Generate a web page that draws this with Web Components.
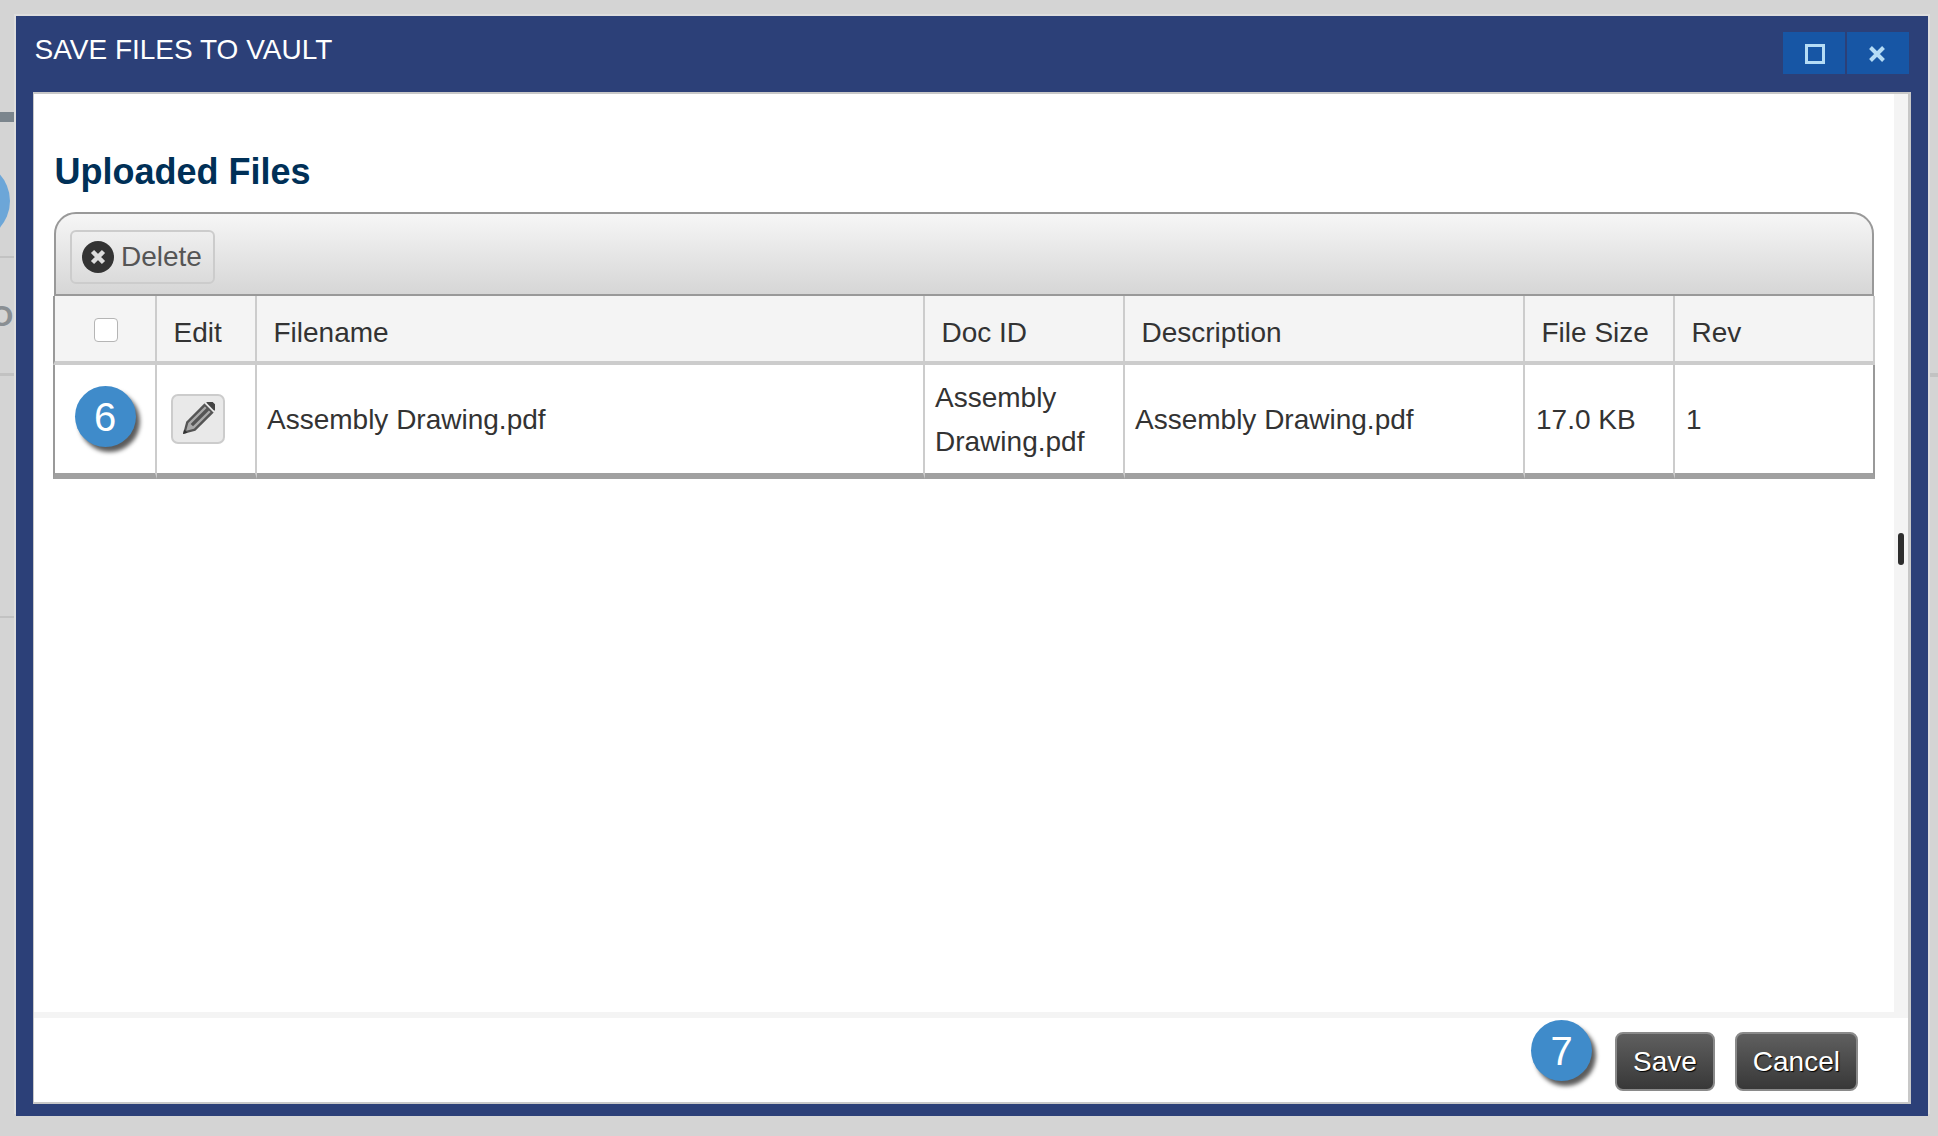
<!DOCTYPE html>
<html lang="en">
<head>
<meta charset="utf-8">
<title>Save Files to Vault</title>
<style>
    html, body { margin: 0; height: 100%; }
    body { background: #d4d4d4; font: 28px "Liberation Sans", Arial, sans-serif; color: #333; overflow: hidden; }
</style>
</head>
<body>
<vault-desktop>
    <vault-window heading="SAVE FILES TO VAULT">
        <section-heading>Uploaded Files</section-heading>
        <grid-toolbar>
            <delete-button>Delete</delete-button>
        </grid-toolbar>
        <files-table></files-table>

        <step-badge slot="footer" number="7" style="margin-top:1px"></step-badge>
        <action-button slot="footer" style="margin-left:23px">Save</action-button>
        <action-button slot="footer" style="margin-left:20px">Cancel</action-button>
    </vault-window>
</vault-desktop>

<script>
// Page behind the dialog: only its edges stick out
class VaultDesktop extends HTMLElement {
    constructor() {
        super();
        this.attachShadow({ mode: 'open' });
    }
    connectedCallback() {
        this.shadowRoot.innerHTML = `
            <style>
                :host { display: block; position: relative; height: 1136px; box-sizing: border-box; padding: 16px 10px 20px 16px; overflow: hidden; }
                .bit { position: absolute; }
                .bar { left: 0; top: 112px; width: 14px; height: 10px; background: #7b858d; }
                .circle { left: -70px; top: 161px; width: 80px; height: 80px; border-radius: 50%; background: #6ca6d8; }
                .letter { left: -10px; top: 297px; font-size: 30px; line-height: 38px; font-weight: bold; color: #8a8f93; }
                .line { left: 0; width: 14px; background: #c2c2c2; }
                .tick { right: 0; top: 373px; width: 8px; height: 4px; background: #c2c2c2; }
                ::slotted(*) { position: relative; }
            </style>
            <div class="bit bar"></div>
            <div class="bit circle"></div>
            <div class="bit letter">O</div>
            <div class="bit line" style="top:256px;height:2px"></div>
            <div class="bit line" style="top:373px;height:3px"></div>
            <div class="bit line" style="top:616px;height:2px"></div>
            <div class="bit tick"></div>
            <slot></slot>
        `;
    }
}
customElements.define('vault-desktop', VaultDesktop);

// Dialog frame: title bar, scrolling body, footer
class VaultWindow extends HTMLElement {
    constructor() {
        super();
        this.attachShadow({ mode: 'open' });
    }
    connectedCallback() {
        this.shadowRoot.innerHTML = `
            <style>
                :host { display: flex; flex-direction: column; height: 100%; box-sizing: border-box; padding: 0 17px 12px; background: #2c4078; box-shadow: -2px -2px 0 #dedede, 2px -2px 0 #dedede; }
                .titlebar { flex: none; display: flex; justify-content: space-between; height: 76px; margin: 0 2px 0 1.5px; color: #fff; }
                .title { padding-top: 18px; line-height: 32px; }
                .controls { display: flex; gap: 2px; padding-top: 16px; height: 42px; }
                .controls button { width: 62px; height: 42px; padding: 0; border: 0; background: #1756a5; display: flex; align-items: center; justify-content: center; }
                .controls svg { margin-top: 2px; }
                .content { flex: 1; min-height: 0; display: flex; flex-direction: column; background: #fff; border: solid #c8c8c8; border-width: 2px 3px 2px 1px; }
                .main { flex: 1; min-height: 0; display: flex; }
                .scroll { flex: 1; min-width: 0; box-sizing: border-box; padding: 57px 0 0 20px; }
                .track { flex: none; width: 14px; position: relative; background: #f4f4f4; }
                .thumb { position: absolute; left: 4px; top: 439px; width: 6px; height: 32px; border-radius: 3px; background: #2e2e2e; }
                .divider { flex: none; height: 6px; background: #f4f4f4; }
                .footer { flex: none; height: 84px; box-sizing: border-box; padding: 1px 50px 0 0; display: flex; justify-content: flex-end; align-items: flex-start; }
            </style>
            <div class="titlebar">
                <div class="title">${this.getAttribute('heading')}</div>
                <div class="controls">
                    <button aria-label="Maximize">
                        <svg width="20" height="20" viewBox="0 0 20 20" style="margin-left:1px"><rect x="1.5" y="1.5" width="17" height="17" fill="none" stroke="#b5dcf5" stroke-width="3"/></svg>
                    </button>
                    <button aria-label="Close">
                        <svg width="18" height="18" viewBox="0 0 18 18" style="margin-right:3px"><path d="M2.5 2.5L15.5 15.5M15.5 2.5L2.5 15.5" fill="none" stroke="#b5dcf5" stroke-width="4"/></svg>
                    </button>
                </div>
            </div>
            <div class="content">
                <div class="main">
                    <div class="scroll"><slot></slot></div>
                    <div class="track"><div class="thumb"></div></div>
                </div>
                <div class="divider"></div>
                <div class="footer"><slot name="footer"></slot></div>
            </div>
        `;
    }
}
customElements.define('vault-window', VaultWindow);

class SectionHeading extends HTMLElement {
    constructor() {
        super();
        this.attachShadow({ mode: 'open' });
        this.shadowRoot.innerHTML = `
            <style>
                :host { display: block; margin: 1px 0 20px 0.5px; font-size: 36px; line-height: 40px; font-weight: bold; color: #003057; }
            </style>
            <slot></slot>
        `;
    }
}
customElements.define('section-heading', SectionHeading);

class GridToolbar extends HTMLElement {
    constructor() {
        super();
        this.attachShadow({ mode: 'open' });
        this.shadowRoot.innerHTML = `
            <style>
                :host { display: block; box-sizing: border-box; width: 1820px; height: 84px; padding: 16px 0 0 14px; border: 2px solid #999; border-radius: 22px 22px 0 0; background: linear-gradient(#f6f6f6, #d6d6d6); }
            </style>
            <slot></slot>
        `;
    }
}
customElements.define('grid-toolbar', GridToolbar);

class DeleteButton extends HTMLElement {
    constructor() {
        super();
        this.attachShadow({ mode: 'open' });
        this.shadowRoot.innerHTML = `
            <style>
                :host { display: inline-flex; align-items: center; box-sizing: border-box; height: 54px; padding: 0 11px 0 10px; gap: 7px; border: 2px solid #ccc; border-radius: 6px; color: #555; }
                svg { display: block; flex: none; }
            </style>
            <svg width="32" height="32" viewBox="0 0 32 32">
                <circle cx="16" cy="16" r="16" fill="#333"/>
                <path d="M10.5 10.5L21.5 21.5M21.5 10.5L10.5 21.5" fill="none" stroke="#ddd" stroke-width="4.5"/>
            </svg>
            <slot></slot>
        `;
    }
}
customElements.define('delete-button', DeleteButton);

// Blue numbered callout
class StepBadge extends HTMLElement {
    constructor() {
        super();
        this.attachShadow({ mode: 'open' });
    }
    connectedCallback() {
        this.shadowRoot.innerHTML = `
            <style>
                :host { display: inline-flex; align-items: center; justify-content: center; flex: none; width: 61px; height: 61px; border-radius: 50%; background: #3f8bca; color: #fff; font-size: 40px; line-height: 1; box-shadow: 4px 5px 4px #5c5c5c; }
            </style>
            ${this.getAttribute('number')}
        `;
    }
}
customElements.define('step-badge', StepBadge);

class ActionButton extends HTMLElement {
    constructor() {
        super();
        this.attachShadow({ mode: 'open' });
        this.shadowRoot.innerHTML = `
            <style>
                :host { display: inline-flex; align-items: center; flex: none; box-sizing: border-box; height: 59px; margin-top: 13px; padding: 0 16px; border: 2px solid #8a8a8a; border-radius: 8px; background: linear-gradient(#5f5f5f, #383838); color: #fff; text-shadow: 1px 1px 1px #000; }
            </style>
            <slot></slot>
        `;
    }
}
customElements.define('action-button', ActionButton);

const files = [
    { filename: 'Assembly Drawing.pdf', docId: 'Assembly Drawing.pdf', description: 'Assembly Drawing.pdf', size: '17.0 KB', rev: '1' }
];

class FilesTable extends HTMLElement {
    constructor() {
        super();
        this.attachShadow({ mode: 'open' });
    }
    connectedCallback() {
        const rows = files.map(file => `
            <tr>
                <td class="pick"><step-badge number="6"></step-badge></td>
                <td class="edit">
                    <span class="edit-btn">
                        <svg width="34" height="34" viewBox="0 0 34 34">
                            <g transform="translate(2 32) rotate(-45)">
                                <path d="M0 0L11 -6.5H37V6.5H11Z" fill="#555"/>
                                <path d="M4.5 0L11.5 -4H35V-1.7H12.5V1.7H35V4H11.5Z" fill="#aaa"/>
                                <path d="M0 0L4 -2.4V2.4Z" fill="#333"/>
                                <rect x="37" y="-6.5" width="1.6" height="13" fill="#e8e8e8"/>
                                <rect x="38.6" y="-6.5" width="5" height="13" rx="2" fill="#444"/>
                            </g>
                        </svg>
                    </span>
                </td>
                <td>${file.filename}</td>
                <td>${file.docId}</td>
                <td>${file.description}</td>
                <td class="tail">${file.size}</td>
                <td class="tail">${file.rev}</td>
            </tr>
        `).join('');
        this.shadowRoot.innerHTML = `
            <style>
                :host { display: block; width: 1822px; margin-left: -1px; }
                table { width: 100%; table-layout: fixed; border-collapse: separate; border-spacing: 0; box-sizing: border-box; }
                th { height: 69px; box-sizing: border-box; padding: 9px 0 0 16.5px; text-align: left; font-weight: normal; background: #f4f4f4; border-right: 2px solid #ccc; border-bottom: 4px solid #ccc; }
                th:first-child { border-left: 2px solid #999; padding: 3px 0 0 1.5px; text-align: center; }
                td { height: 114px; box-sizing: border-box; padding: 2px 0 0 10px; line-height: 44px; border-right: 2px solid #ccc; border-bottom: 6px solid #a0a0a0; }
                td:first-child { border-left: 2px solid #999; }
                td:last-child { border-right: 2px solid #999; }
                td.tail { padding-left: 11px; }
                .pick { padding: 0 0 5px 0; text-align: center; }
                .edit { padding-left: 14px; }
                .edit-btn { display: flex; align-items: center; justify-content: center; box-sizing: border-box; width: 54px; height: 50px; margin-top: -3px; border: 2px solid #ccc; border-radius: 7px; background: #e9e9e9; }
                svg { display: block; }
                input { appearance: none; display: block; box-sizing: border-box; width: 24px; height: 24px; margin: 0 auto; border: 1px solid #b5b5b5; border-radius: 4px; background: #fff; }
            </style>
            <table>
                <colgroup>
                    <col style="width:104px"><col style="width:100px"><col style="width:668px"><col style="width:200px"><col style="width:400px"><col style="width:150px"><col style="width:200px">
                </colgroup>
                <thead>
                    <tr>
                        <th><input type="checkbox" aria-label="Select all"></th>
                        <th>Edit</th>
                        <th>Filename</th>
                        <th>Doc ID</th>
                        <th>Description</th>
                        <th>File Size</th>
                        <th>Rev</th>
                    </tr>
                </thead>
                <tbody>${rows}</tbody>
            </table>
        `;
    }
}
customElements.define('files-table', FilesTable);
</script>
</body>
</html>
